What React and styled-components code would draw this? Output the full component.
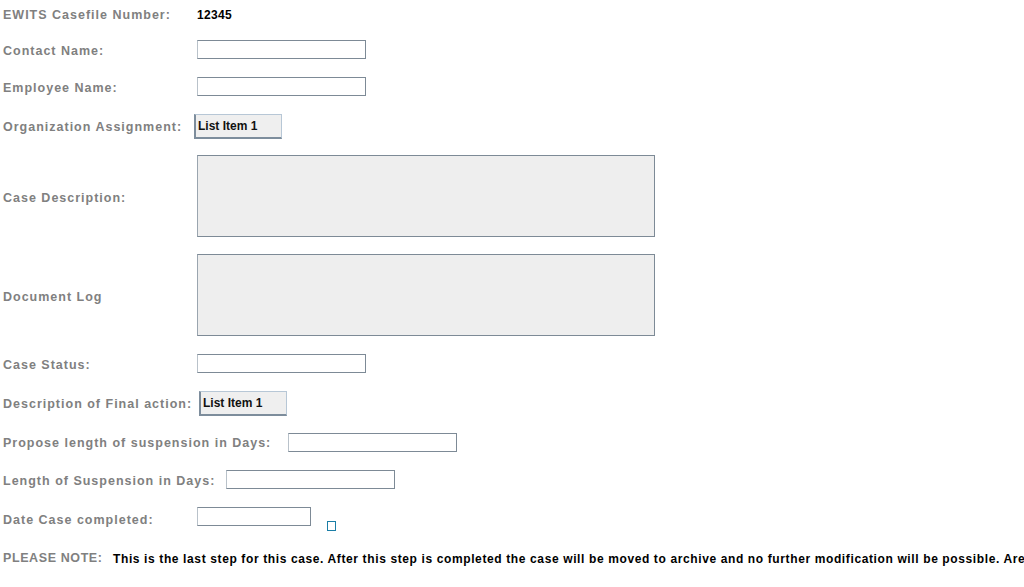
import React from "react";
import styled, { createGlobalStyle } from "styled-components";

const Global = createGlobalStyle`
  html, body {
    margin: 0;
    padding: 0;
    background: #ffffff;
    overflow: hidden;
  }
  body {
    font-family: "Liberation Sans", Arial, sans-serif;
  }
`;

const Form = styled.div`
  display: flex;
  flex-direction: column;
  width: 1024px;
  height: 587px;
  overflow: hidden;
`;

const Row = styled.div`
  display: flex;
  align-items: center;
  height: ${(p) => p.$h}px;
  padding-left: 3px;
  white-space: nowrap;
`;

const Label = styled.div`
  flex: none;
  box-sizing: border-box;
  width: ${(p) => (p.$w ? `${p.$w}px` : "auto")};
  padding-top: ${(p) => p.$pt ?? 4}px;
  font-size: 12.5px;
  font-weight: bold;
  letter-spacing: ${(p) => p.$ls ?? 1}px;
  color: #808080;
`;

const Value = styled.div`
  padding-top: 4px;
  font-size: 12px;
  font-weight: bold;
  color: #000000;
  letter-spacing: 0.3px;
`;

const TextInput = styled.div`
  flex: none;
  box-sizing: border-box;
  width: ${(p) => p.$w}px;
  height: 19px;
  background: #ffffff;
  border: 1px solid #7d8a96;
  border-left-color: #b9c2ca;
`;

const TextArea = styled.div`
  flex: none;
  box-sizing: border-box;
  width: 458px;
  height: 82px;
  background: #eeeeee;
  border: 1px solid #7d8a96;
  border-left-color: #9aa5af;
`;

const Combo = styled.div`
  flex: none;
  box-sizing: border-box;
  width: 88px;
  height: 25px;
  display: flex;
  align-items: center;
  padding-left: 2px;
  background: #efefef;
  border: 1px solid #b7c7d6;
  border-left: 2px solid #7d8d9c;
  border-bottom: 2px solid #7d8d9c;
  font-size: 12px;
  font-weight: bold;
  color: #111111;
`;

const Check = styled.div`
  flex: none;
  box-sizing: border-box;
  width: 9px;
  height: 10px;
  margin-left: 16px;
  margin-top: 20px;
  border: 1.5px solid #1b7ea6;
  background: #ffffff;
`;

const Note = styled.div`
  padding-top: 4px;
  font-size: 12px;
  font-weight: bold;
  letter-spacing: 0.62px;
  color: #000000;
`;

export default function App() {
  return (
    <>
      <Global />
      <Form>
        <Row $h={26}>
          <Label $w={194}>EWITS Casefile Number:</Label>
          <Value>12345</Value>
        </Row>
        <Row $h={46}>
          <Label $w={194}>Contact Name:</Label>
          <TextInput $w={169} />
        </Row>
        <Row $h={28}>
          <Label $w={194}>Employee Name:</Label>
          <TextInput $w={169} />
        </Row>
        <Row $h={52}>
          <Label $w={191} $pt={2}>Organization Assignment:</Label>
          <Combo>List Item 1</Combo>
        </Row>
        <Row $h={88}>
          <Label $w={194}>Case Description:</Label>
          <TextArea />
        </Row>
        <Row $h={110}>
          <Label $w={194}>Document Log</Label>
          <TextArea />
        </Row>
        <Row $h={26}>
          <Label $w={194}>Case Status:</Label>
          <TextInput $w={169} />
        </Row>
        <Row $h={54}>
          <Label $w={196} $pt={2}>Description of Final action:</Label>
          <Combo>List Item 1</Combo>
        </Row>
        <Row $h={24}>
          <Label $w={285} $pt={2}>Propose length of suspension in Days:</Label>
          <TextInput $w={169} />
        </Row>
        <Row $h={50}>
          <Label $w={223}>Length of Suspension in Days:</Label>
          <TextInput $w={169} />
        </Row>
        <Row $h={24}>
          <Label $w={194} $pt={8}>Date Case completed:</Label>
          <TextInput $w={114} />
          <Check />
        </Row>
        <Row $h={58}>
          <Label $w={110} $ls={0.6} $pt={2}>PLEASE NOTE:</Label>
          <Note>
            This is the last step for this case. After this step is completed the case will be moved to archive and no further modification will be possible. Are you sure you want to continue?
          </Note>
        </Row>
      </Form>
    </>
  );
}
